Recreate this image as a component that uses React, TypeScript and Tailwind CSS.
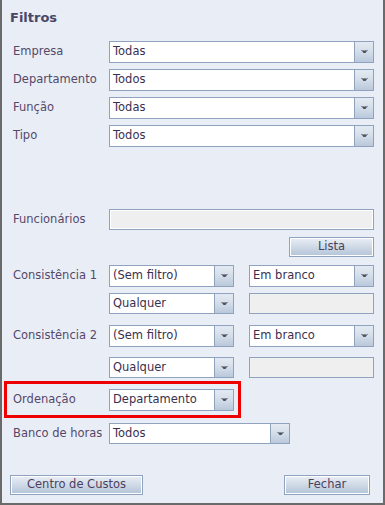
import React from "react";

const font = { fontFamily: '"DejaVu Sans", Verdana, sans-serif' };

function Arrow() {
  return (
    <div className="w-[19px] h-full border-l border-[#8fa3bf] bg-gradient-to-b from-[#e4eaf2] via-[#d3dde9] to-[#b9c8da] flex items-center justify-center">
      <svg width="7" height="4" viewBox="0 0 7 4">
        <rect x="0" y="0" width="7" height="1" fill="#8a8f9a" />
        <polygon points="1,1 6,1 4.5,3 2.5,3" fill="#4d5260" />
      </svg>
    </div>
  );
}

function Select({ value, w, h = "h-[22px]" }: { value: string; w: string; h?: string }) {
  return (
    <div className={`${w} ${h} border border-[#8fa3bf] bg-white flex items-stretch`}>
      <div className="flex-1 flex items-center pl-[3px] text-[11.5px] text-[#3a3050] overflow-hidden whitespace-nowrap">{value}</div>
      <Arrow />
    </div>
  );
}

function Btn({ label, w }: { label: string; w: string }) {
  return (
    <div className={`${w} h-[20px] border border-[#8fa3bf] p-[1px] bg-white`}>
      <div className="w-full h-full bg-gradient-to-b from-[#e6ecf3] via-[#cfd9e6] to-[#b6c6da] flex items-center justify-center text-[11.5px] text-[#4a4060]">
        {label}
      </div>
    </div>
  );
}

function Label({ text }: { text: string }) {
  return <div className="w-[96px] text-[11.5px] text-[#55486a] whitespace-nowrap">{text}</div>;
}

export default function App() {
  return (
    <div style={font} className="w-[385px] h-[505px] bg-[#e9eef6] border-l-2 border-r-2 border-b-2 border-[#6a6a6a] flex flex-col pl-[11px]">
      <div className="h-[41px] pt-[8px]">
        <div className="text-[13px] font-bold text-[#4a4766] -ml-[3px]">Filtros</div>
      </div>
      <div className="flex items-center h-[22px]">
        <Label text="Empresa" />
        <Select value="Todas" w="w-[265px]" />
      </div>
      <div className="flex items-center h-[22px] mt-[6px]">
        <Label text="Departamento" />
        <Select value="Todos" w="w-[265px]" />
      </div>
      <div className="flex items-center h-[22px] mt-[6px]">
        <Label text="Função" />
        <Select value="Todas" w="w-[265px]" />
      </div>
      <div className="flex items-center h-[22px] mt-[6px]">
        <Label text="Tipo" />
        <Select value="Todos" w="w-[265px]" />
      </div>
      <div className="flex items-center h-[21px] mt-[62px]">
        <Label text="Funcionários" />
        <div className="w-[265px] h-[21px] border border-[#8fa3bf] p-[1px] bg-white">
          <div className="w-full h-full bg-[#efefef]" />
        </div>
      </div>
      <div className="flex h-[20px] mt-[7px] pl-[276px]">
        <Btn label="Lista" w="w-[85px]" />
      </div>
      <div className="flex items-center h-[22px] mt-[8px]">
        <Label text="Consistência 1" />
        <Select value="(Sem filtro)" w="w-[125px]" />
        <div className="w-[15px]" />
        <Select value="Em branco" w="w-[125px]" />
      </div>
      <div className="flex items-center h-[21px] mt-[6px]">
        <Label text="" />
        <Select value="Qualquer" w="w-[125px]" h="h-[21px]" />
        <div className="w-[15px]" />
        <div className="w-[125px] h-[21px] border border-[#8fa3bf] bg-[#efefef]" />
      </div>
      <div className="flex items-center h-[22px] mt-[11px]">
        <Label text="Consistência 2" />
        <Select value="(Sem filtro)" w="w-[125px]" />
        <div className="w-[15px]" />
        <Select value="Em branco" w="w-[125px]" />
      </div>
      <div className="flex items-center h-[21px] mt-[10px]">
        <Label text="" />
        <Select value="Qualquer" w="w-[125px]" h="h-[21px]" />
        <div className="w-[15px]" />
        <div className="w-[125px] h-[21px] border border-[#8fa3bf] bg-[#efefef]" />
      </div>
      <div className="mt-[3px] -ml-[9px] w-[237px] h-[37px] border-[3px] border-[#ee0000] flex items-center pl-[6px]">
        <Label text="Ordenação" />
        <Select value="Departamento" w="w-[125px]" />
      </div>
      <div className="flex items-center h-[21px] mt-[5px]">
        <Label text="Banco de horas" />
        <Select value="Todos" w="w-[181px]" h="h-[21px]" />
      </div>
      <div className="flex items-center justify-between h-[20px] mt-[31px] -ml-[3px] pr-[13px]">
        <Btn label="Centro de Custos" w="w-[133px]" />
        <Btn label="Fechar" w="w-[86px]" />
      </div>
    </div>
  );
}
